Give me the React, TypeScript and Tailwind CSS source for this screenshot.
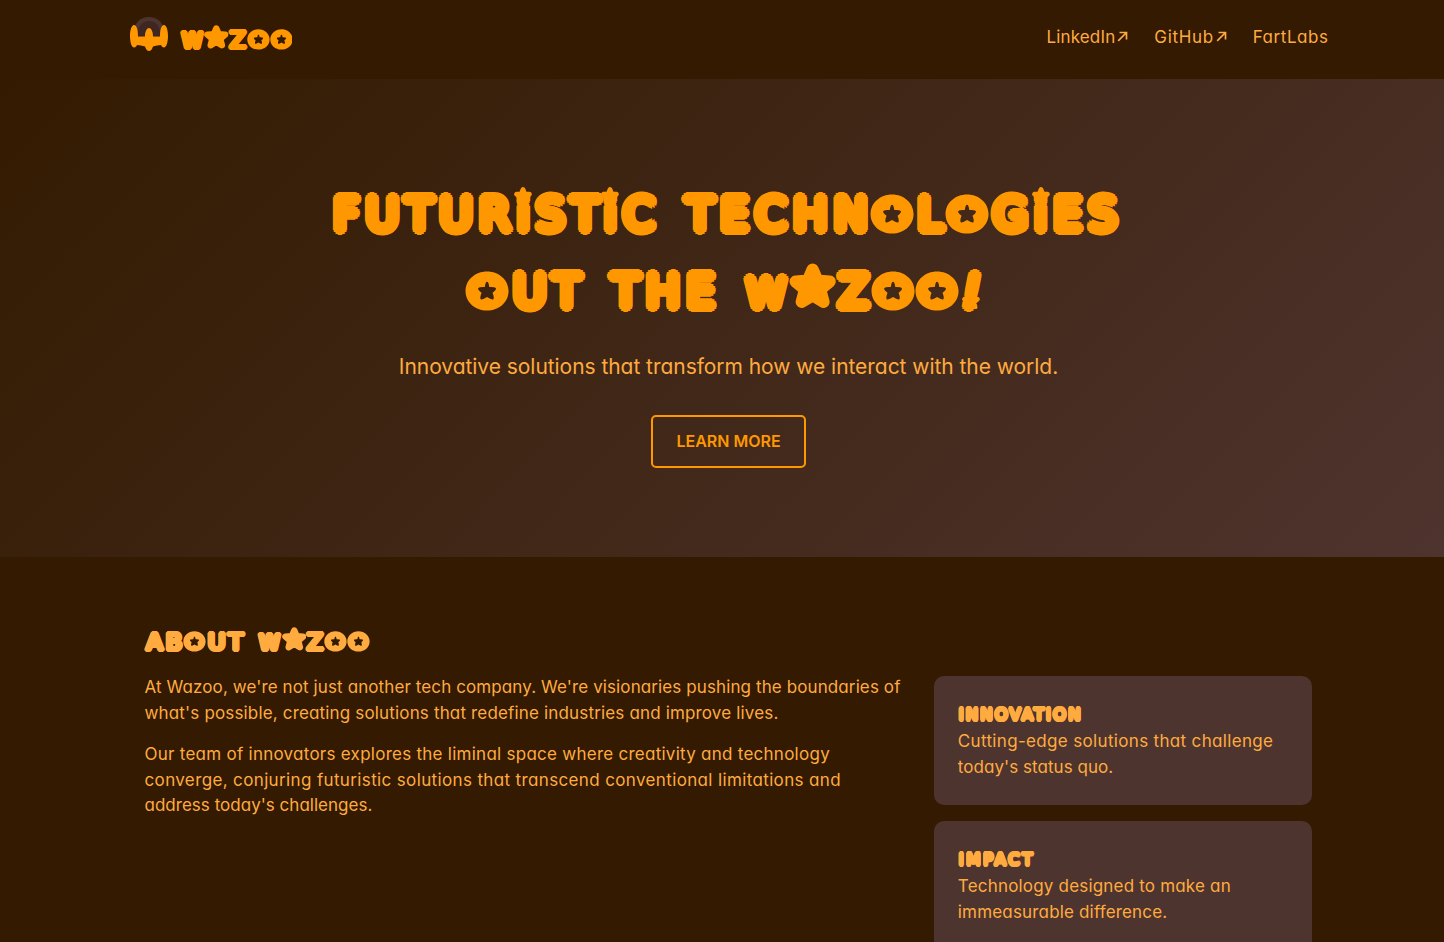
import type { ReactNode } from "react";

const STAR =
  "M50 14 L60 38 L86 40 L66 57 L73 84 L50 70 L27 84 L34 57 L14 40 L40 38 Z";

function Star({ className }: { className: string }) {
  return (
    <svg
      viewBox="0 0 100 98"
      preserveAspectRatio="none"
      className={className}
      fill="currentColor"
      stroke="currentColor"
      strokeWidth="26"
      strokeLinejoin="round"
      aria-hidden="true"
    >
      <path d={STAR} />
    </svg>
  );
}

function Ring() {
  return (
    <svg
      viewBox="0 0 88 80"
      className="absolute top-[0.13em] left-[-0.096em] h-[0.89em] w-[0.98em]"
      aria-hidden="true"
    >
      <path
        fill="currentColor"
        fillRule="evenodd"
        d="M44 1C68 1 87 18 87 40S68 79 44 79S1 62 1 40S20 1 44 1Z M39.500 32Q41 21.500 44 21.500Q47 21.500 48.500 32Q59.500 31.500 61.500 34Q63.500 37.500 55 43.500Q59 54 56.500 56.500Q53.500 58.500 44 52Q34.500 58.500 31.500 56.500Q29 54 33 43.500Q24.500 37.500 26.500 34Q28.500 31.500 39.500 32Z"
      />
    </svg>
  );
}

function Bubble({ text }: { text: string }) {
  const out: ReactNode[] = [];
  text.split("").forEach((c, i) => {
    if (c === "O") {
      out.push(
        <span key={i} className="relative tracking-[0.18em] [text-shadow:none]">
          O<Ring />
        </span>,
      );
    } else if (c === "i") {
      out.push(
        <span key={i} className="relative">
          i
          <Star className="absolute top-[-0.03em] left-[-0.06em] h-[0.39em] w-[0.4em]" />
        </span>,
      );
    } else if (c === "W") {
      out.push(
        <span key={i} className="text-[0.88em]">
          W
        </span>,
      );
    } else if (c === "A" && text[i - 1] === "W") {
      out.push(
        <span
          key={i}
          className="relative top-[-0.35em] ml-[0.68em] text-[0.5em] tracking-[0.68em] [text-shadow:none]"
        >
          A
          <Star className="absolute top-[-0.675em] left-[-0.8em] h-[2.02em] w-[2.1em]" />
        </span>,
      );
    } else if (c === "!") {
      out.push(
        <span key={i} className="relative italic">
          !
          <Star className="absolute top-[0.6em] left-[-0.02em] h-[0.39em] w-[0.4em]" />
        </span>,
      );
    } else {
      out.push(c);
    }
  });
  return <>{out}</>;
}

const bubble =
  "font-['DejaVu_Sans',sans-serif] font-normal [text-shadow:0.105em_0_currentColor,0.091em_0.053em_currentColor,0.053em_0.091em_currentColor,0_0.105em_currentColor,-0.053em_0.091em_currentColor,-0.091em_0.053em_currentColor,-0.105em_0_currentColor,-0.091em_-0.053em_currentColor,-0.053em_-0.091em_currentColor,0_-0.105em_currentColor,0.053em_-0.091em_currentColor,0.091em_-0.053em_currentColor,0.05em_0.03em_currentColor,-0.05em_0.03em_currentColor,0.05em_-0.03em_currentColor,-0.05em_-0.03em_currentColor,0_0.05em_currentColor,0_-0.05em_currentColor]";

function Logo() {
  return (
    <svg width="38" height="34" viewBox="0 0 38 34" aria-hidden="true">
      <path d="M4 18V14A15 14 0 0 1 34 14V18Z" fill="#4e342e" />
      <path d="M8 19V15A11 11 0 0 1 30 15V19Z" fill="#3e2723" />
      <path
        d="M4 8C6.500 8 8 12 8 19.500H15C15 14 17 11 19 11S23 14 23 19.500H30C30 12 31.500 8 34 8C36.500 8 38 13 38 19S36.500 30.500 34 30.500C32.500 30.500 31.500 29.500 31 28Q27 28 23 29.500Q21.500 34 19 34T15 29.500Q11 28 7 28C6.500 29.500 5.500 30.500 4 30.500C1.500 30.500 0 25 0 19S1.500 8 4 8Z"
        fill="#ff9800"
      />
    </svg>
  );
}

function Arrow() {
  return (
    <svg
      width="11"
      height="11"
      viewBox="0 0 11 11"
      className="mb-1 ml-[2px]"
      fill="none"
      stroke="currentColor"
      strokeWidth="1.700"
      aria-hidden="true"
    >
      <path d="M1.200 9.800 L9.500 1.500 M2.500 1.500H9.500V8.500" />
    </svg>
  );
}

function Card({ title, children }: { title: ReactNode; children: ReactNode }) {
  return (
    <div className="h-[129px] shrink-0 rounded-[10px] bg-[#4e342e] p-6">
      <h3 className={`${bubble} h-[29px] pl-px text-[16.5px] leading-[30px] whitespace-nowrap`}>
        {title}
      </h3>
      <p className="leading-[25.6px] whitespace-nowrap">{children}</p>
    </div>
  );
}

export default function App() {
  return (
    <div className="h-[942px] w-full overflow-hidden bg-[#331a00] font-['Inter',sans-serif] text-[17px] text-[#ffab40] [font-feature-settings:'cv11']">
      <div className="w-[1457px]">
        <header className="h-[79px] bg-[#331a00]">
          <div className="mx-auto flex h-full w-[1200px] justify-between pl-[1.5px]">
            <a className="flex items-start pt-[17px] text-[#ff9800]">
              <Logo />
              <span
                className={`${bubble} ml-[14px] pt-[7px] text-[23.4px] leading-[32px] tracking-[0.147em]`}
              >
                <Bubble text="WAZOO" />
              </span>
            </a>
            <nav className="flex h-[76px] items-center gap-[26px]">
              <a className="flex items-center">
                <span className="tracking-[0.15px]">LinkedIn</span>
                <Arrow />
              </a>
              <a className="flex items-center">
                <span className="tracking-[0.65px]">GitHub</span>
                <Arrow />
              </a>
              <a className="tracking-[0.55px]">FartLabs</a>
            </nav>
          </div>
        </header>

        <section className="flex h-[478px] flex-col items-center bg-[linear-gradient(135deg,#331a00,#4e342e)] pt-[98px]">
          <h1
            className={`${bubble} text-center text-[45px] leading-[76.8px] tracking-[0.147em] whitespace-nowrap text-[#ff9800] [word-spacing:4px]`}
          >
            <Bubble text="FUTURiSTiC TECHNOLOGiES" />
            <br />
            <Bubble text="OUT THE WAZOO!" />
          </h1>
          <p className="mt-[13px] text-[21px] leading-8 tracking-[-0.045px]">
            Innovative solutions that transform how we interact with the world.
          </p>
          <a className="mt-8 flex h-[53px] w-[155px] items-center justify-center rounded-[5px] border-2 border-[#ff9800] text-[16px] font-semibold text-[#ff9800]">
            LEARN MORE
          </a>
        </section>

        <section className="mx-auto grid w-[1200px] grid-cols-[2fr_1fr] gap-8 px-4 pt-16">
          <div>
            <h2
              className={`${bubble} h-[54px] pl-[2px] text-[23.4px] leading-[42px] tracking-[0.147em] whitespace-nowrap [word-spacing:2px]`}
            >
              <Bubble text="ABOUT WAZOO" />
            </h2>
            <p className="leading-[25.6px] whitespace-nowrap">
              <span className="tracking-[0.106px]">
                At Wazoo, we're not just another tech company. We're visionaries pushing the
                boundaries of
              </span>
              <br />
              <span className="tracking-[0.16px]">
                what's possible, creating solutions that redefine industries and improve lives.
              </span>
            </p>
            <p className="mt-4 leading-[25.6px] whitespace-nowrap">
              <span className="tracking-[0.26px]">
                Our team of innovators explores the liminal space where creativity and technology
              </span>
              <br />
              <span className="tracking-[0.363px]">
                converge, conjuring futuristic solutions that transcend conventional limitations and
              </span>
              <br />
              <span className="tracking-[0.02px]">address today's challenges.</span>
            </p>
          </div>
          <div className="flex flex-col gap-4 pt-[55px]">
            <Card title={<span className="tracking-[2.1px]">INNOVATION</span>}>
              <span className="tracking-[0.335px]">Cutting-edge solutions that challenge</span>
              <br />
              <span className="tracking-[0.05px]">today's status quo.</span>
            </Card>
            <Card title={<span className="tracking-[2.6px]">IMPACT</span>}>
              <span className="tracking-[0.19px]">Technology designed to make an</span>
              <br />
              <span className="tracking-[0.17px]">immeasurable difference.</span>
            </Card>
          </div>
        </section>
      </div>
    </div>
  );
}
